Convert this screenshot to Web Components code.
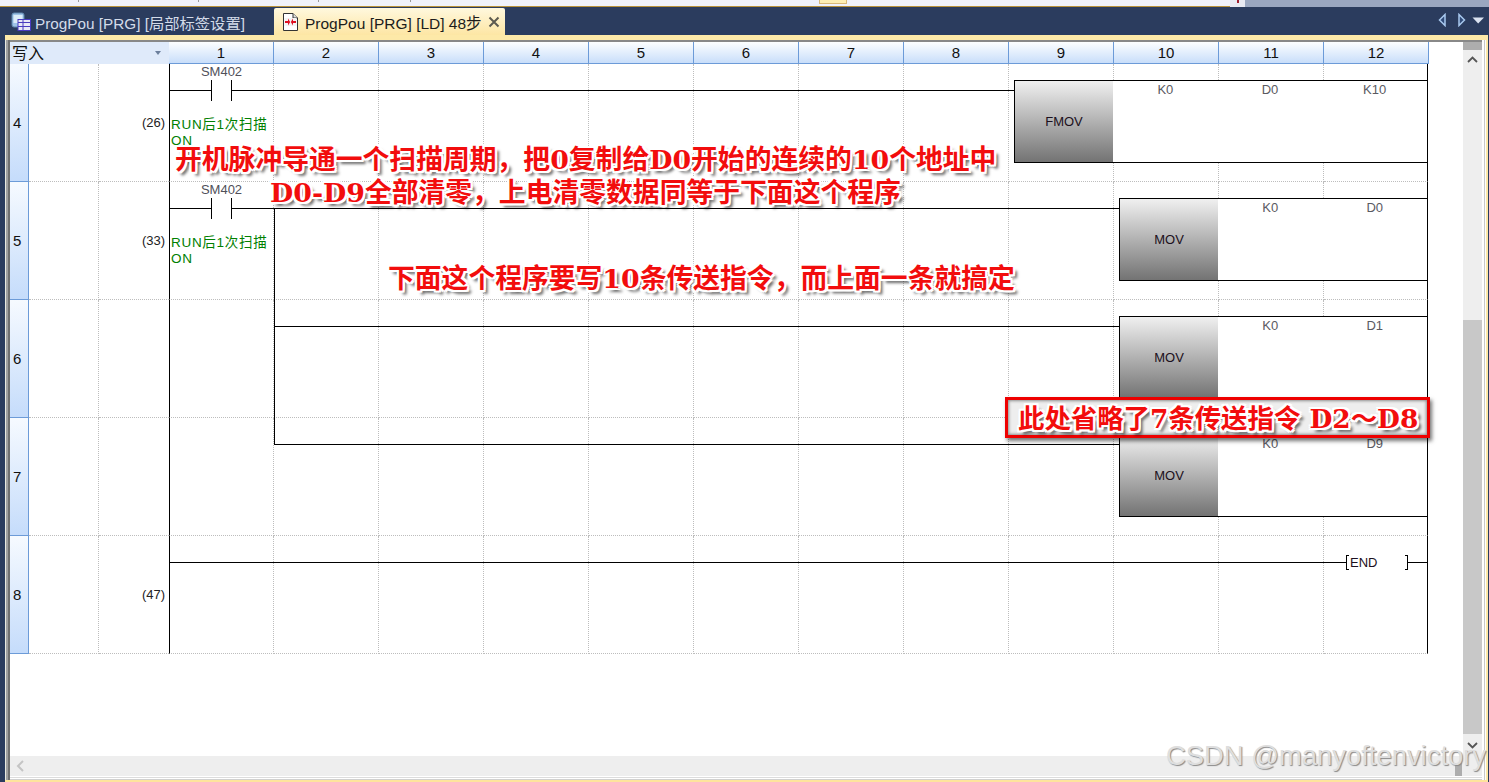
<!DOCTYPE html>
<html lang="zh">
<head>
<meta charset="utf-8">
<title>ProgPou</title>
<style>
html, body { margin: 0; height: 100%; overflow: hidden; background: #2b3c5e; }
</style>
</head>
<body>
<plc-window>
    <doc-tab slot="tabs" icon="list" label="ProgPou [PRG] [局部标签设置]"></doc-tab>
    <doc-tab slot="tabs" icon="ladder" label="ProgPou [PRG] [LD] 48步" active></doc-tab>

    <ladder-header></ladder-header>

    <ladder-row num="4" step="(26)">
        <ld-comment style="grid-column:4">RUN后1次扫描<br>ON</ld-comment>
        <ld-rung style="grid-column:4 / 16">
            <ld-contact label="SM402"></ld-contact>
            <ld-wire></ld-wire>
            <ld-fn name="FMOV" args="K0,D0,K10"></ld-fn>
        </ld-rung>
    </ladder-row>
    <ladder-row num="5" step="(33)">
        <ld-comment style="grid-column:4">RUN后1次扫描<br>ON</ld-comment>
        <ld-rung style="grid-column:4 / 16">
            <ld-contact label="SM402"></ld-contact>
            <ld-wire></ld-wire>
            <ld-fn name="MOV" args="K0,D0"></ld-fn>
        </ld-rung>
        <ld-branch style="grid-column:5;margin-top:26px"></ld-branch>
    </ladder-row>
    <ladder-row num="6">
        <ld-rung style="grid-column:5 / 16">
            <ld-wire></ld-wire>
            <ld-fn name="MOV" args="K0,D1"></ld-fn>
        </ld-rung>
        <ld-branch style="grid-column:5"></ld-branch>
    </ladder-row>
    <ladder-row num="7">
        <ld-rung style="grid-column:5 / 16">
            <ld-wire></ld-wire>
            <ld-fn name="MOV" args="K0,D9"></ld-fn>
        </ld-rung>
        <ld-branch style="grid-column:5;height:27px"></ld-branch>
    </ladder-row>
    <ladder-row num="8" step="(47)">
        <ld-rung style="grid-column:4 / 16">
            <ld-wire></ld-wire>
            <ld-end></ld-end>
        </ld-rung>
    </ladder-row>

    <red-note slot="over" style="left:175px;top:142px">开机脉冲导通一个扫描周期，把0复制给D0开始的连续的10个地址中</red-note>
    <red-note slot="over" style="left:270px;top:175px">D0-D9全部清零，上电清零数据同等于下面这个程序</red-note>
    <red-note slot="over" style="left:388px;top:261px">下面这个程序要写10条传送指令，而上面一条就搞定</red-note>
    <red-note slot="over" boxed style="left:1005px;top:397px">此处省略了7条传送指令 D2～D8</red-note>
    <water-mark slot="over" style="left:1166px;top:741px">CSDN @manyoftenvictory</water-mark>
</plc-window>

<script>
const tplWindow = document.createElement('template');
tplWindow.innerHTML = `
    <style>
        :host {
            display: flex;
            flex-direction: column;
            position: relative;
            width: 1489px;
            height: 782px;
            overflow: hidden;
            background: #2b3c5e;
            font-family: "Liberation Sans", "Noto Sans CJK SC", sans-serif;
        }
        .strip { display: flex; height: 7px; flex: none; }
        .menu {
            width: 1230px;
            background: #f0f2fb;
            border-bottom: 1px solid #b8923c;
            box-sizing: border-box;
            position: relative;
        }
        .tick { position: absolute; top: 0; width: 1px; height: 2px; background: #999; }
        .hot {
            position: absolute;
            left: 819px;
            top: 0;
            width: 28px;
            height: 4px;
            box-sizing: border-box;
            background: #fdeeb4;
            border: 1px solid #d9b978;
            border-top: 0;
        }
        .dot { width: 15px; background: #e8eaf2; position: relative; }
        .dot::after { content: ""; position: absolute; left: 7px; top: 0; width: 2px; height: 3px; background: #a02030; }
        .rest { flex: 1; background: #9aa7c0; }
        .tabs {
            display: flex;
            align-items: flex-end;
            flex: none;
            height: 28px;
            padding-left: 5px;
            background: #2b3c5e;
        }
        .nav { margin-left: auto; display: flex; align-self: center; padding: 0 3px 2px 0; }
        .frame {
            flex: 1;
            min-height: 0;
            display: flex;
            margin: 0 1px 0 5px;
            border-top: 5px solid #fde9a8;
            border-bottom: 2px solid #fee49c;
            background: #fff;
        }
        .edge { width: 5px; flex: none; background: linear-gradient(90deg, #e9e9e0 0 1px, #a0a0a0 1px 3px, #707070 3px 5px); }
        .body { flex: 1; min-width: 0; display: flex; flex-direction: column; border-top: 2px solid #888; }
        .main { flex: 1; min-height: 0; display: flex; }
        .sheet { flex: 1; min-width: 0; background: #fff; }
        .vbar {
            width: 19px;
            flex: none;
            display: flex;
            flex-direction: column;
            align-items: center;
            background: #eeeeee;
        }
        .vbar .cap { align-self: stretch; height: 8px; background: #adadad; }
        .vbar .up { margin-top: 6px; }
        .vbar .gap { flex: 1; }
        .vbar .thumb { align-self: stretch; height: 414px; background: #c8c8c8; margin-bottom: 8px; }
        .vbar .down { margin-bottom: 7px; }
        .hbar {
            height: 20px;
            flex: none;
            display: flex;
            align-items: center;
            padding-left: 6px;
            background: #eeeeee;
        }
        .hbar .thumb { margin-left: auto; margin-right: 20px; margin-top: 7px; width: 7px; height: 13px; background: #adadad; }
        .foot { height: 4px; flex: none; background: linear-gradient(#fff 0 1px, #dcdcdc 1px 2px, #fff 2px 3px, #d0d0d0 3px 4px); }
        .side { width: 6px; flex: none; background: linear-gradient(90deg, #fff 0 2px, #c8c8c8 2px 3px, #fff 3px 4px, #fde9a8 4px 6px); }
    </style>
    <div class="strip">
        <div class="menu">
            <i class="tick" style="left:78px"></i><i class="tick" style="left:198px"></i>
            <i class="tick" style="left:318px"></i><i class="tick" style="left:410px"></i>
            <i class="hot"></i>
        </div>
        <div class="dot"></div>
        <div class="rest"></div>
    </div>
    <div class="tabs">
        <slot name="tabs"></slot>
        <div class="nav">
            <svg width="48" height="14" viewBox="0 0 48 14">
                <path d="M7 1.5 1.5 7 7 12.5Z" fill="#2f4a78" stroke="#a8c8ee" stroke-width="1.5"/>
                <path d="M21 1.5 26.5 7 21 12.5Z" fill="#2f4a78" stroke="#a8c8ee" stroke-width="1.5"/>
                <path d="M34.5 4.5H46L40.2 10.5Z" fill="#dbe3f1"/>
            </svg>
        </div>
    </div>
    <div class="frame">
        <div class="edge"></div>
        <div class="body">
            <div class="main">
                <div class="sheet"><slot></slot></div>
                <div class="vbar">
                    <div class="cap"></div>
                    <svg class="up" width="11" height="7" viewBox="0 0 11 7"><path d="M1 6 5.5 1.5 10 6" fill="none" stroke="#555" stroke-width="1.8"/></svg>
                    <div class="gap"></div>
                    <div class="thumb"></div>
                    <svg class="down" width="11" height="7" viewBox="0 0 11 7"><path d="M1 1 5.5 5.5 10 1" fill="none" stroke="#555" stroke-width="1.8"/></svg>
                </div>
            </div>
            <div class="hbar">
                <svg width="8" height="12" viewBox="0 0 8 12"><path d="M7 1 2 6 7 11" fill="none" stroke="#c4c4c4" stroke-width="2"/></svg>
                <div class="thumb"></div>
            </div>
            <div class="foot"></div>
        </div>
        <div class="side"></div>
    </div>
    <slot name="over"></slot>
`;

class PlcWindow extends HTMLElement {
    constructor() {
        super();
        this.attachShadow({ mode: 'open' });
        this.shadowRoot.appendChild(tplWindow.content.cloneNode(true));
    }
}
customElements.define('plc-window', PlcWindow);

// tab icons, 20x20
const TAB_ICONS = {
    list: `
        <rect x="1" y="1" width="12" height="14" rx="2" fill="#9fc3e6" stroke="#5f87ad"/>
        <rect x="2.5" y="3" width="9" height="8" fill="#dcecf8"/>
        <rect x="7" y="7.5" width="12.5" height="11" fill="#e9e9f7" stroke="#4a3cc0"/>
        <path d="M7 10.5H19.5M7 14.5H19.5M12 7.5V18.5" stroke="#4a3cc0" fill="none"/>`,
    ladder: `
        <path d="M2.5 1.5H12L16.5 6V18.5H2.5Z" fill="#fff" stroke="#333"/>
        <path d="M12 1.5V6H16.5" fill="#ddd" stroke="#333"/>
        <rect x="3.5" y="6" width="12" height="8" fill="#f4f4f4"/>
        <path d="M4 9H7V6.5L9.2 10 7 13.5V11H4ZM15 9H12V6.5L9.8 10 12 13.5V11H15Z" fill="#e01020"/>`,
};

const tplTab = document.createElement('template');
tplTab.innerHTML = `
    <style>
        :host {
            display: block;
            font-size: 15.3px;
            color: #d3dbe9;
        }
        .tab {
            display: flex;
            align-items: center;
            height: 27px;
            box-sizing: border-box;
            padding: 0 9px 0 6px;
            width: 269px;
            white-space: nowrap;
        }
        svg { flex: none; margin-right: 4px; }
        :host([active]) { color: #1c1c1c; font-size: 15.5px; }
        :host([active]) .tab {
            width: 231px;
            padding: 0 5px 0 7px;
            background: linear-gradient(#fff8de, #fde6a4);
            border-radius: 2px 2px 0 0;
        }
        :host([active]) svg { margin-right: 4px; }
        .close { display: none; margin-left: auto; }
        :host([active]) .close { display: block; margin: 0 0 0 auto; }
    </style>
    <div class="tab">
        <svg width="20" height="20" viewBox="0 0 20 20"></svg>
        <span class="label"></span>
        <svg class="close" width="12" height="12" viewBox="0 0 12 12"><path d="M1.5 1.5 10.5 10.5M10.5 1.5 1.5 10.5" stroke="#5c5a50" stroke-width="2"/></svg>
    </div>
`;

class DocTab extends HTMLElement {
    constructor() {
        super();
        this.attachShadow({ mode: 'open' });
        this.shadowRoot.appendChild(tplTab.content.cloneNode(true));
    }

    connectedCallback() {
        this.shadowRoot.querySelector('svg').innerHTML = TAB_ICONS[this.getAttribute('icon')];
        this.shadowRoot.querySelector('.label').textContent = this.getAttribute('label');
    }
}
customElements.define('doc-tab', DocTab);

const tplHeader = document.createElement('template');
tplHeader.innerHTML = `
    <style>
        :host { display: flex; height: 22px; color: #111; }
        .mode {
            width: 159px;
            box-sizing: border-box;
            display: flex;
            align-items: center;
            padding: 0 8px 3px 2px;
            font-size: 16px;
            background: #dfeafa;
            justify-content: space-between;
        }
        .mode i { border: 3px solid transparent; border-top: 4px solid #6c7f9c; border-bottom: 0; margin-top: 3px; }
        .col {
            width: 105px;
            box-sizing: border-box;
            text-align: center;
            font-size: 15px;
            line-height: 21px;
            background: linear-gradient(#fdfeff, #c8defa);
            border-right: 1px solid #6c9bd8;
            border-bottom: 1px solid #6c9bd8;
        }
    </style>
    <div class="mode"><span>写入</span><i></i></div>
`;

class LadderHeader extends HTMLElement {
    constructor() {
        super();
        this.attachShadow({ mode: 'open' });
        this.shadowRoot.appendChild(tplHeader.content.cloneNode(true));
        for (let n = 1; n <= 12; n++) {
            const col = document.createElement('div');
            col.className = 'col';
            col.textContent = n;
            this.shadowRoot.appendChild(col);
        }
    }
}
customElements.define('ladder-header', LadderHeader);

const tplRow = document.createElement('template');
tplRow.innerHTML = `
    <style>
        :host { display: block; height: 118px; }
        .row {
            display: grid;
            grid-template-columns: 19px 70px 70px repeat(11, 105px) 104px;
            grid-template-rows: 118px;
            width: 1419px;
        }
        .row > div, ::slotted(*) { grid-row: 1; }
        .cell {
            box-sizing: border-box;
            border-right: 1px dotted #bdbdbd;
            border-bottom: 1px dotted #bdbdbd;
        }
        .num {
            grid-column: 1;
            box-sizing: border-box;
            display: flex;
            align-items: center;
            padding-left: 3px;
            font-size: 15px;
            color: #111;
            background: linear-gradient(#f6faff, #c5dcfb);
            border-right: 1px solid #6c9bd8;
            border-bottom: 1px solid #6c9bd8;
        }
        .step {
            grid-column: 3;
            box-sizing: border-box;
            display: flex;
            align-items: center;
            justify-content: flex-end;
            padding: 0 4px 0 0;
            font-size: 13px;
            color: #222;
            border-bottom: 1px dotted #bdbdbd;
        }
        .first { border-left: 1px solid #000; }
        .last { border-right: 1px solid #000; }
    </style>
    <div class="row">
        <div class="num"></div>
        <div class="cell" style="grid-column:2"></div>
        <div class="step"></div>
        <slot></slot>
    </div>
`;

class LadderRow extends HTMLElement {
    constructor() {
        super();
        this.attachShadow({ mode: 'open' });
        this.shadowRoot.appendChild(tplRow.content.cloneNode(true));
    }

    connectedCallback() {
        const root = this.shadowRoot;
        root.querySelector('.num').textContent = this.getAttribute('num');
        root.querySelector('.step').textContent = this.getAttribute('step') || '';
        const row = root.querySelector('.row');
        const slot = root.querySelector('slot');
        for (let n = 1; n <= 12; n++) {
            const cell = document.createElement('div');
            cell.className = 'cell' + (n === 1 ? ' first' : '') + (n === 12 ? ' last' : '');
            cell.style.gridColumn = n + 3;
            row.insertBefore(cell, slot);
        }
    }
}
customElements.define('ladder-row', LadderRow);

// a run of the ladder: contacts, wires and the output, left to right
const tplRung = document.createElement('template');
tplRung.innerHTML = `
    <style>
        :host { display: flex; align-items: flex-start; min-width: 0; }
    </style>
    <slot></slot>
`;
class LdRung extends HTMLElement {
    constructor() {
        super();
        this.attachShadow({ mode: 'open' });
        this.shadowRoot.appendChild(tplRung.content.cloneNode(true));
    }
}
customElements.define('ld-rung', LdRung);

class LdWire extends HTMLElement {
    constructor() {
        super();
        this.attachShadow({ mode: 'open' }).innerHTML = `
            <style>
                :host { display: block; flex: 1; height: 1px; margin-top: 26px; background: #000; }
            </style>`;
    }
}
customElements.define('ld-wire', LdWire);

class LdBranch extends HTMLElement {
    constructor() {
        super();
        this.attachShadow({ mode: 'open' }).innerHTML = `
            <style>
                :host { display: block; width: 1px; background: #000; justify-self: start; }
            </style>`;
    }
}
customElements.define('ld-branch', LdBranch);

class LdContact extends HTMLElement {
    constructor() {
        super();
        this.attachShadow({ mode: 'open' }).innerHTML = `
            <style>
                :host { display: flex; flex: none; align-items: flex-start; }
                .lead { width: 42px; height: 1px; margin-top: 26px; background: #000; }
                .pair {
                    position: relative;
                    width: 19px;
                    height: 21px;
                    margin-top: 16px;
                    border-left: 1px solid #000;
                    border-right: 1px solid #000;
                }
                .label {
                    position: absolute;
                    left: 50%;
                    top: -16px;
                    transform: translateX(-50%);
                    font-size: 13px;
                    line-height: 15px;
                    color: #50505a;
                }
            </style>
            <div class="lead"></div>
            <div class="pair"><span class="label"></span></div>`;
    }

    connectedCallback() {
        this.shadowRoot.querySelector('.label').textContent = this.getAttribute('label');
    }
}
customElements.define('ld-contact', LdContact);

class LdFn extends HTMLElement {
    constructor() {
        super();
        this.attachShadow({ mode: 'open' }).innerHTML = `
            <style>
                :host {
                    display: flex;
                    flex: none;
                    box-sizing: border-box;
                    height: 83px;
                    margin-top: 16px;
                    border: 1px solid #000;
                    background: #fff;
                    font-size: 13px;
                }
                .name {
                    width: 98px;
                    flex: none;
                    display: flex;
                    align-items: center;
                    justify-content: center;
                    color: #1c1020;
                    background: linear-gradient(#f0f0f0, #737373);
                }
                .arg {
                    flex: 1;
                    text-align: center;
                    padding-top: 1px;
                    line-height: 15px;
                    color: #5a5a62;
                }
            </style>
            <div class="name"></div>`;
    }

    connectedCallback() {
        const args = this.getAttribute('args').split(',');
        this.shadowRoot.querySelector('.name').textContent = this.getAttribute('name');
        this.style.width = (99 + args.length * 105) + 'px';
        args.forEach(a => {
            const d = document.createElement('div');
            d.className = 'arg';
            d.textContent = a;
            this.shadowRoot.appendChild(d);
        });
    }
}
customElements.define('ld-fn', LdFn);

class LdEnd extends HTMLElement {
    constructor() {
        super();
        this.attachShadow({ mode: 'open' }).innerHTML = `
            <style>
                :host { display: flex; flex: none; align-items: flex-start; margin-top: 19px; }
                .br { width: 3px; height: 15px; box-sizing: border-box; border: 1px solid #000; }
                .l { border-right: 0; }
                .r { border-left: 0; }
                .txt { width: 56px; padding-left: 1px; font-size: 13px; line-height: 15px; color: #1c1020; box-sizing: border-box; }
                .tail { width: 20px; height: 1px; margin-top: 7px; background: #000; }
            </style>
            <div class="br l"></div><div class="txt">END</div><div class="br r"></div><div class="tail"></div>`;
    }
}
customElements.define('ld-end', LdEnd);

class LdComment extends HTMLElement {
    constructor() {
        super();
        this.attachShadow({ mode: 'open' }).innerHTML = `
            <style>
                :host {
                    display: block;
                    padding: 53px 0 0 2px;
                    font-size: 13.5px;
                    letter-spacing: .7px;
                    line-height: 16px;
                    color: #008000;
                    white-space: nowrap;
                }
            </style>
            <slot></slot>`;
    }
}
customElements.define('ld-comment', LdComment);

class RedNote extends HTMLElement {
    constructor() {
        super();
        this.attachShadow({ mode: 'open' }).innerHTML = `
            <style>
                :host {
                    position: absolute;
                    display: block;
                    font-family: "DejaVu Serif", "Noto Sans CJK SC", serif;
                    font-size: 26.8px;
                    font-weight: 700;
                    line-height: 36px;
                    color: #f20d0d;
                    white-space: nowrap;
                    text-shadow:
                        2px 0 #fff, -2px 0 #fff, 0 2px #fff, 0 -2px #fff,
                        2px 2px #fff, -2px 2px #fff, 2px -2px #fff, -2px -2px #fff,
                        4px 4px 3px rgba(0, 0, 0, .6);
                }
                :host([boxed]) {
                    box-sizing: border-box;
                    width: 425px;
                    height: 41px;
                    padding-left: 10px;
                    font-size: 26.4px;
                    line-height: 37px;
                    border: 3px solid #ee0000;
                    background: #eeeeee;
                    box-shadow: 2px 3px 4px rgba(0, 0, 0, .55), inset 0 0 3px 1px #8e8e8e;
                }
            </style>
            <slot></slot>`;
    }
}
customElements.define('red-note', RedNote);

class WaterMark extends HTMLElement {
    constructor() {
        super();
        this.attachShadow({ mode: 'open' }).innerHTML = `
            <style>
                :host {
                    position: absolute;
                    display: block;
                    font-size: 27.4px;
                    line-height: 30px;
                    color: #dedede;
                    white-space: nowrap;
                    text-shadow: 1px 1px 1px #8a8a8a;
                }
            </style>
            <slot></slot>`;
    }
}
customElements.define('water-mark', WaterMark);
</script>
</body>
</html>
